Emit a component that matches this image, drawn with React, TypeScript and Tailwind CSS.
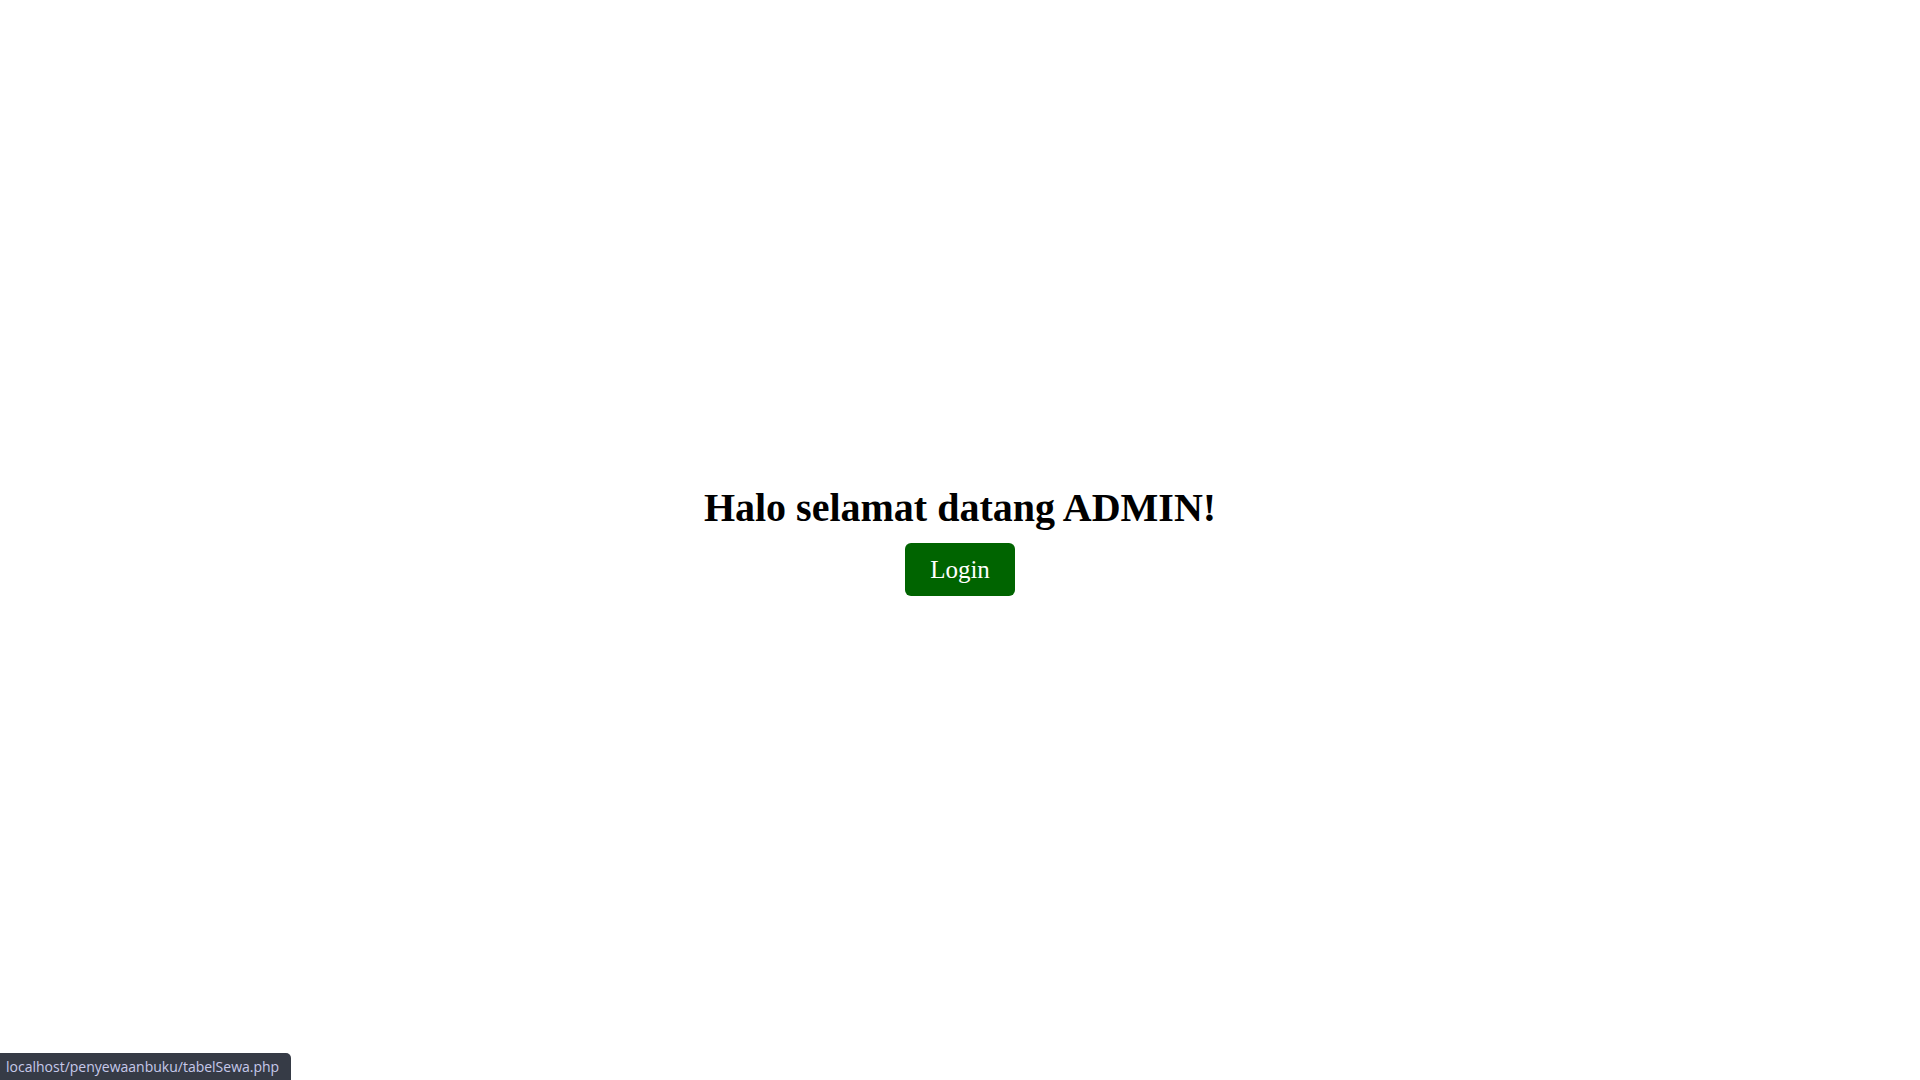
import React from "react";

export default function App() {
  return (
    <div className="relative h-screen w-full overflow-hidden bg-white font-['Liberation_Serif','Times_New_Roman',serif]">
      <div className="flex h-full flex-col items-center justify-center">
        <h1 className="text-[40px] font-bold leading-[normal] text-black">
          Halo selamat datang ADMIN!
        </h1>
        <button className="mt-[12.5px] rounded-[6px] bg-[#006400] px-[25px] py-[12.5px] font-['Liberation_Serif',serif] text-[25px] leading-[normal] text-white">
          Login
        </button>
      </div>
      <div className="absolute bottom-0 left-0 flex h-[27px] w-[291px] items-center rounded-tr-[5px] bg-[#363b46] pl-[6px] font-['Open_Sans','Noto_Sans',sans-serif] text-[14px] text-[#c6c9ea]">
        localhost/penyewaanbuku/tabelSewa.php
      </div>
    </div>
  );
}
